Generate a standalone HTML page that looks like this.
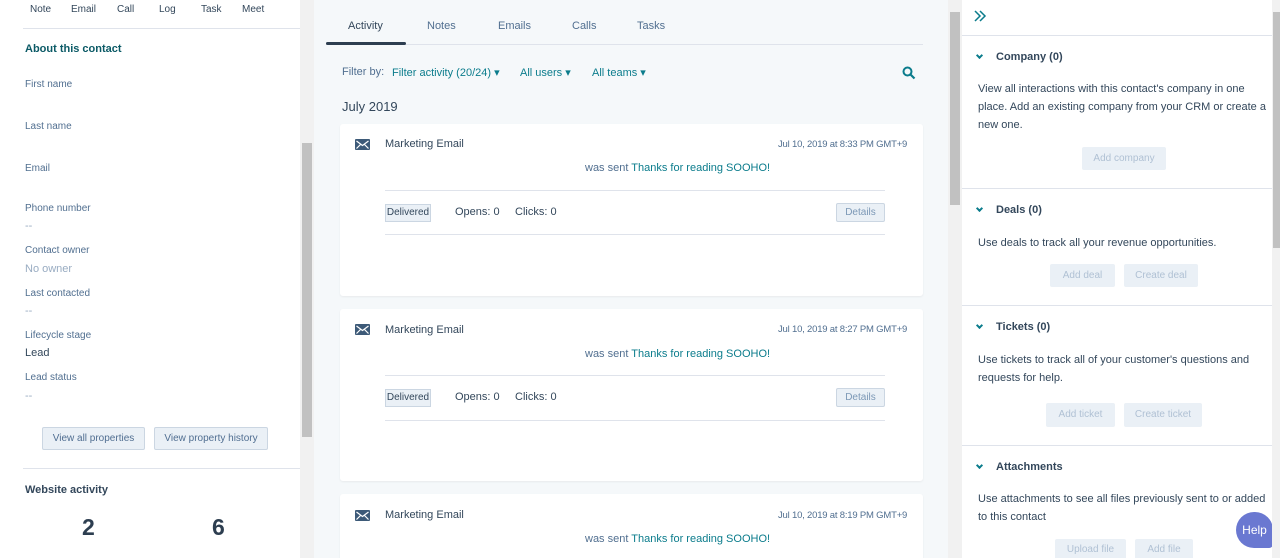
<!DOCTYPE html>
<html><head><meta charset="utf-8"><style>
*{margin:0;padding:0;box-sizing:border-box}
html,body{width:1280px;height:558px;overflow:hidden}
body{position:relative;font-family:"Liberation Sans",sans-serif;color:#33475b;background:#f5f8fa}
.a{position:absolute;white-space:nowrap}
.lbl{font-size:10px;color:#516f90}
.val{font-size:11px;color:#99acc2}
.btn{position:absolute;background:#eaf0f6;border:1px solid #cbd6e2;border-radius:2px;font-size:10px;color:#506e91;text-align:center}
.dbtn{position:absolute;background:#eaf0f6;border-radius:2px;font-size:10px;color:#b0c1d4;text-align:center}
.card{position:absolute;left:340px;width:583px;background:#fff;border-radius:3px;box-shadow:0 1px 2px rgba(0,0,0,.06)}
.link{color:#0b7c8c}
.hr{position:absolute;height:1px;background:#dfe3eb}
.rt{font-size:11px;color:#33475b;line-height:18px}
.chev{position:absolute;width:5px;height:5px;border-right:2px solid #0b7c8c;border-bottom:2px solid #0b7c8c;transform:rotate(45deg)}
.dt{font-size:9.5px;color:#516f90;letter-spacing:-0.2px}
</style></head><body>
<div class="a" style="left:0;top:0;width:300px;height:558px;background:#fff"></div>
<div class="a" style="left:30px;top:4px;font-size:10px">Note</div>
<div class="a" style="left:71px;top:4px;font-size:10px">Email</div>
<div class="a" style="left:117px;top:4px;font-size:10px">Call</div>
<div class="a" style="left:159px;top:4px;font-size:10px">Log</div>
<div class="a" style="left:201px;top:4px;font-size:10px">Task</div>
<div class="a" style="left:242px;top:4px;font-size:10px">Meet</div>
<div class="hr" style="left:23px;top:28px;width:277px"></div>
<div class="a" style="left:25px;top:43px;font-size:11px;font-weight:bold;color:#0b5a66">About this contact</div>
<div class="a lbl" style="left:25px;top:79px">First name</div>
<div class="a lbl" style="left:25px;top:121px">Last name</div>
<div class="a lbl" style="left:25px;top:163px">Email</div>
<div class="a lbl" style="left:25px;top:203px">Phone number</div>
<div class="a val" style="left:25px;top:220px">--</div>
<div class="a lbl" style="left:25px;top:245px">Contact owner</div>
<div class="a val" style="left:25px;top:263px">No owner</div>
<div class="a lbl" style="left:25px;top:288px">Last contacted</div>
<div class="a val" style="left:25px;top:305px">--</div>
<div class="a lbl" style="left:25px;top:330px">Lifecycle stage</div>
<div class="a" style="left:25px;top:347px;font-size:11px">Lead</div>
<div class="a lbl" style="left:25px;top:372px">Lead status</div>
<div class="a val" style="left:25px;top:390px">--</div>
<div class="btn" style="left:42px;top:427px;width:103px;height:23px;line-height:21px">View all properties</div>
<div class="btn" style="left:154px;top:427px;width:114px;height:23px;line-height:21px">View property history</div>
<div class="hr" style="left:23px;top:468px;width:277px"></div>
<div class="a" style="left:25px;top:484px;font-size:11px;font-weight:bold">Website activity</div>
<div class="a" style="left:82px;top:514px;font-size:23px;font-weight:bold;color:#2d3e50">2</div>
<div class="a" style="left:212px;top:514px;font-size:23px;font-weight:bold;color:#2d3e50">6</div>
<div class="a" style="left:300px;top:0;width:14px;height:558px;background:#f1f1f1"></div>
<div class="a" style="left:302px;top:143px;width:10px;height:294px;background:#c1c1c1"></div>
<div class="a" style="left:348px;top:20px;font-size:11px">Activity</div>
<div class="a" style="left:427px;top:20px;font-size:11px;color:#516f90">Notes</div>
<div class="a" style="left:498px;top:20px;font-size:11px;color:#516f90">Emails</div>
<div class="a" style="left:572px;top:20px;font-size:11px;color:#516f90">Calls</div>
<div class="a" style="left:637px;top:20px;font-size:11px;color:#516f90">Tasks</div>
<div class="hr" style="left:326px;top:44px;width:597px"></div>
<div class="a" style="left:326px;top:42px;width:80px;height:3px;background:#2d3e50;border-radius:2px"></div>
<div class="a" style="left:342px;top:66px;font-size:11px;color:#516f90">Filter by:</div>
<div class="a link" style="left:392px;top:66px;font-size:11px">Filter activity (20/24) ▾</div>
<div class="a link" style="left:520px;top:66px;font-size:11px">All users ▾</div>
<div class="a link" style="left:592px;top:66px;font-size:11px">All teams ▾</div>
<svg class="a" style="left:902px;top:66px" width="14" height="14" viewBox="0 0 14 14"><circle cx="5.5" cy="5.5" r="4" fill="none" stroke="#0b7c8c" stroke-width="2"/><path d="M8.5 8.5L12.5 12.5" stroke="#0b7c8c" stroke-width="2.2"/></svg>
<div class="a" style="left:342px;top:99px;font-size:13px">July 2019</div>
<div class="card" style="top:124px;height:172px"></div>
<div class="card" style="top:309px;height:172px"></div>
<div class="card" style="top:494px;height:70px"></div>

<svg class="a" style="left:355px;top:139px" width="15" height="11" viewBox="0 0 15 11"><rect width="15" height="11" rx="1" fill="#3d5a78"/><path d="M1.5 2L7.5 6.5L13.5 2M1.5 9.5L5.5 5.5M13.5 9.5L9.5 5.5" stroke="#fff" stroke-width="1.2" fill="none"/></svg>
<div class="a" style="left:385px;top:138px;font-size:11px">Marketing Email</div>
<div class="a dt" style="left:778px;top:139px">Jul 10, 2019 at 8:33 PM GMT+9</div>
<div class="a" style="left:585px;top:162px;font-size:11px;color:#516f90">was sent <span class="link">Thanks for reading SOOHO!</span></div>
<div class="hr" style="left:385px;top:190px;width:500px"></div>
<div class="a" style="left:385px;top:204px;width:46px;height:18px;background:#eaf0f6;border:1px solid #cbd6e2;font-size:10px;line-height:16px;text-align:center">Delivered</div>
<div class="a" style="left:455px;top:206px;font-size:11px">Opens: 0</div>
<div class="a" style="left:515px;top:206px;font-size:11px">Clicks: 0</div>
<div class="btn" style="left:836px;top:203px;width:49px;height:19px;line-height:17px;color:#7c98b6">Details</div>
<div class="hr" style="left:385px;top:234px;width:500px"></div>

<svg class="a" style="left:355px;top:324px" width="15" height="11" viewBox="0 0 15 11"><rect width="15" height="11" rx="1" fill="#3d5a78"/><path d="M1.5 2L7.5 6.5L13.5 2M1.5 9.5L5.5 5.5M13.5 9.5L9.5 5.5" stroke="#fff" stroke-width="1.2" fill="none"/></svg>
<div class="a" style="left:385px;top:324px;font-size:11px">Marketing Email</div>
<div class="a dt" style="left:778px;top:324px">Jul 10, 2019 at 8:27 PM GMT+9</div>
<div class="a" style="left:585px;top:348px;font-size:11px;color:#516f90">was sent <span class="link">Thanks for reading SOOHO!</span></div>
<div class="hr" style="left:385px;top:375px;width:500px"></div>
<div class="a" style="left:385px;top:389px;width:46px;height:18px;background:#eaf0f6;border:1px solid #cbd6e2;font-size:10px;line-height:16px;text-align:center">Delivered</div>
<div class="a" style="left:455px;top:391px;font-size:11px">Opens: 0</div>
<div class="a" style="left:515px;top:391px;font-size:11px">Clicks: 0</div>
<div class="btn" style="left:836px;top:388px;width:49px;height:19px;line-height:17px;color:#7c98b6">Details</div>
<div class="hr" style="left:385px;top:420px;width:500px"></div>

<svg class="a" style="left:355px;top:510px" width="15" height="11" viewBox="0 0 15 11"><rect width="15" height="11" rx="1" fill="#3d5a78"/><path d="M1.5 2L7.5 6.5L13.5 2M1.5 9.5L5.5 5.5M13.5 9.5L9.5 5.5" stroke="#fff" stroke-width="1.2" fill="none"/></svg>
<div class="a" style="left:385px;top:509px;font-size:11px">Marketing Email</div>
<div class="a dt" style="left:778px;top:510px">Jul 10, 2019 at 8:19 PM GMT+9</div>
<div class="a" style="left:585px;top:533px;font-size:11px;color:#516f90">was sent <span class="link">Thanks for reading SOOHO!</span></div>

<div class="a" style="left:948px;top:0;width:14px;height:558px;background:#f1f1f1"></div>
<div class="a" style="left:950px;top:12px;width:10px;height:193px;background:#c1c1c1"></div>
<div class="a" style="left:962px;top:0;width:310px;height:558px;background:#fff"></div>
<svg class="a" style="left:973px;top:9px" width="14" height="14" viewBox="0 0 14 14"><path d="M2 2L7 7L2 12M7 2L12 7L7 12" fill="none" stroke="#0b7c8c" stroke-width="1.5"/></svg>
<div class="hr" style="left:962px;top:35px;width:310px"></div>
<div class="chev" style="left:977px;top:53px"></div>
<div class="a" style="left:996px;top:51px;font-size:11px;font-weight:bold">Company (0)</div>
<div class="a rt" style="left:978px;top:80px;white-space:normal;width:290px">View all interactions with this contact's company in one place. Add an existing company from your CRM or create a new one.</div>
<div class="dbtn" style="left:1082px;top:147px;width:84px;height:23px;line-height:23px">Add company</div>
<div class="hr" style="left:962px;top:188px;width:310px"></div>
<div class="chev" style="left:977px;top:206px"></div>
<div class="a" style="left:996px;top:204px;font-size:11px;font-weight:bold">Deals (0)</div>
<div class="a rt" style="left:978px;top:234px">Use deals to track all your revenue opportunities.</div>
<div class="dbtn" style="left:1050px;top:264px;width:65px;height:23px;line-height:23px">Add deal</div>
<div class="dbtn" style="left:1124px;top:264px;width:74px;height:23px;line-height:23px">Create deal</div>
<div class="hr" style="left:962px;top:305px;width:310px"></div>
<div class="chev" style="left:977px;top:323px"></div>
<div class="a" style="left:996px;top:321px;font-size:11px;font-weight:bold">Tickets (0)</div>
<div class="a rt" style="left:978px;top:351px;white-space:normal;width:290px">Use tickets to track all of your customer's questions and requests for help.</div>
<div class="dbtn" style="left:1046px;top:403px;width:69px;height:24px;line-height:24px">Add ticket</div>
<div class="dbtn" style="left:1124px;top:403px;width:78px;height:24px;line-height:24px">Create ticket</div>
<div class="hr" style="left:962px;top:445px;width:310px"></div>
<div class="chev" style="left:977px;top:463px"></div>
<div class="a" style="left:996px;top:461px;font-size:11px;font-weight:bold">Attachments</div>
<div class="a rt" style="left:978px;top:490px;white-space:normal;width:290px">Use attachments to see all files previously sent to or added to this contact</div>
<div class="dbtn" style="left:1055px;top:539px;width:71px;height:22px;line-height:22px">Upload file</div>
<div class="dbtn" style="left:1135px;top:539px;width:58px;height:22px;line-height:22px">Add file</div>
<div class="a" style="left:1236px;top:512px;width:37px;height:36px;background:#6a78d1;border-radius:18px 18px 4px 18px;color:#fff;font-size:12px;line-height:36px;text-align:center">Help</div>
<div class="a" style="left:1272px;top:0;width:8px;height:558px;background:#f1f1f1"></div>
<div class="a" style="left:1273px;top:12px;width:7px;height:236px;background:#c1c1c1"></div>
</body></html>
